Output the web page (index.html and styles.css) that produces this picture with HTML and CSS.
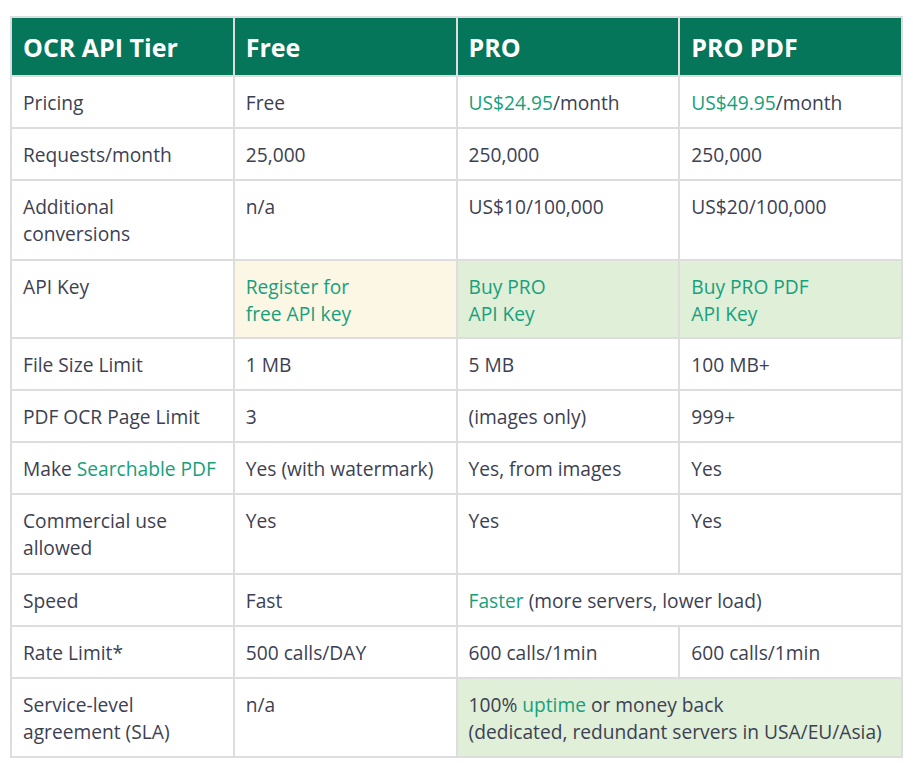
FILE: index.html
```html
<!DOCTYPE html>
<html>
<head>
<meta charset="utf-8">
<link rel="stylesheet" href="styles.css">
</head>
<body>
<table class="tiers">
  <colgroup><col class="c"><col class="c"><col class="c"><col class="c"></colgroup>
  <thead>
    <tr><th>OCR API Tier</th><th>Free</th><th>PRO</th><th>PRO PDF</th></tr>
  </thead>
  <tbody>
    <tr><td>Pricing</td><td>Free</td><td><a>US$24.95</a>/month</td><td><a>US$49.95</a>/month</td></tr>
    <tr><td>Requests/month</td><td>25,000</td><td>250,000</td><td>250,000</td></tr>
    <tr class="two"><td>Additional<br>conversions</td><td>n/a</td><td>US$10/100,000</td><td>US$20/100,000</td></tr>
    <tr class="key"><td>API Key</td><td class="yellow"><a>Register for<br>free API key</a></td><td class="green"><a>Buy PRO<br>API Key</a></td><td class="green"><a>Buy PRO PDF<br>API Key</a></td></tr>
    <tr><td>File Size Limit</td><td>1 MB</td><td>5 MB</td><td>100 MB+</td></tr>
    <tr><td>PDF OCR Page Limit</td><td>3</td><td>(images only)</td><td>999+</td></tr>
    <tr><td>Make <a>Searchable PDF</a></td><td>Yes (with watermark)</td><td>Yes, from images</td><td>Yes</td></tr>
    <tr class="two"><td>Commercial use<br>allowed</td><td>Yes</td><td>Yes</td><td>Yes</td></tr>
    <tr><td>Speed</td><td>Fast</td><td colspan="2"><a>Faster</a> (more servers, lower load)</td></tr>
    <tr><td>Rate Limit*</td><td>500 calls/DAY</td><td>600 calls/1min</td><td>600 calls/1min</td></tr>
    <tr class="sla"><td>Service-level<br>agreement (SLA)</td><td>n/a</td><td colspan="2" class="green">100% <a>uptime</a> or money back<br>(dedicated, redundant servers in USA/EU/Asia)</td></tr>
  </tbody>
</table>
</body>
</html>
```
FILE: styles.css
```css
html, body {
  margin: 0;
  background: #ffffff;
}
body {
  padding: 16px 10px 0 10px;
  font-family: "Open Sans", "Liberation Sans", sans-serif;
  color: #3d3f52;
}
.tiers {
  border-collapse: collapse;
  table-layout: fixed;
  width: 893px;
  border: 2px solid #cdcdcd;
  border-top-color: #dddddd;
  border-left-color: #dddddd;
  font-size: 19.2px;
  line-height: 27px;
}
.tiers col.c {
  width: 25%;
}
.tiers th,
.tiers td {
  border: 2px solid #dddddd;
  text-align: left;
  vertical-align: top;
  padding: 12px 11px 11px 11px;
}
.tiers tr.two td {
  padding-bottom: 12px;
}
.tiers tr.key td {
  padding-bottom: 10px;
}
.tiers th {
  background: #06765a;
  color: #ffffff;
  font-size: 25px;
  font-weight: 700;
  line-height: 32px;
  padding: 13px 11px 12px 11px;
}
.tiers a {
  color: #17a07c;
  text-decoration: none;
}
.tiers td.yellow {
  background: #fcf7e4;
}
.tiers td.green {
  background: #dfefd8;
}
```
